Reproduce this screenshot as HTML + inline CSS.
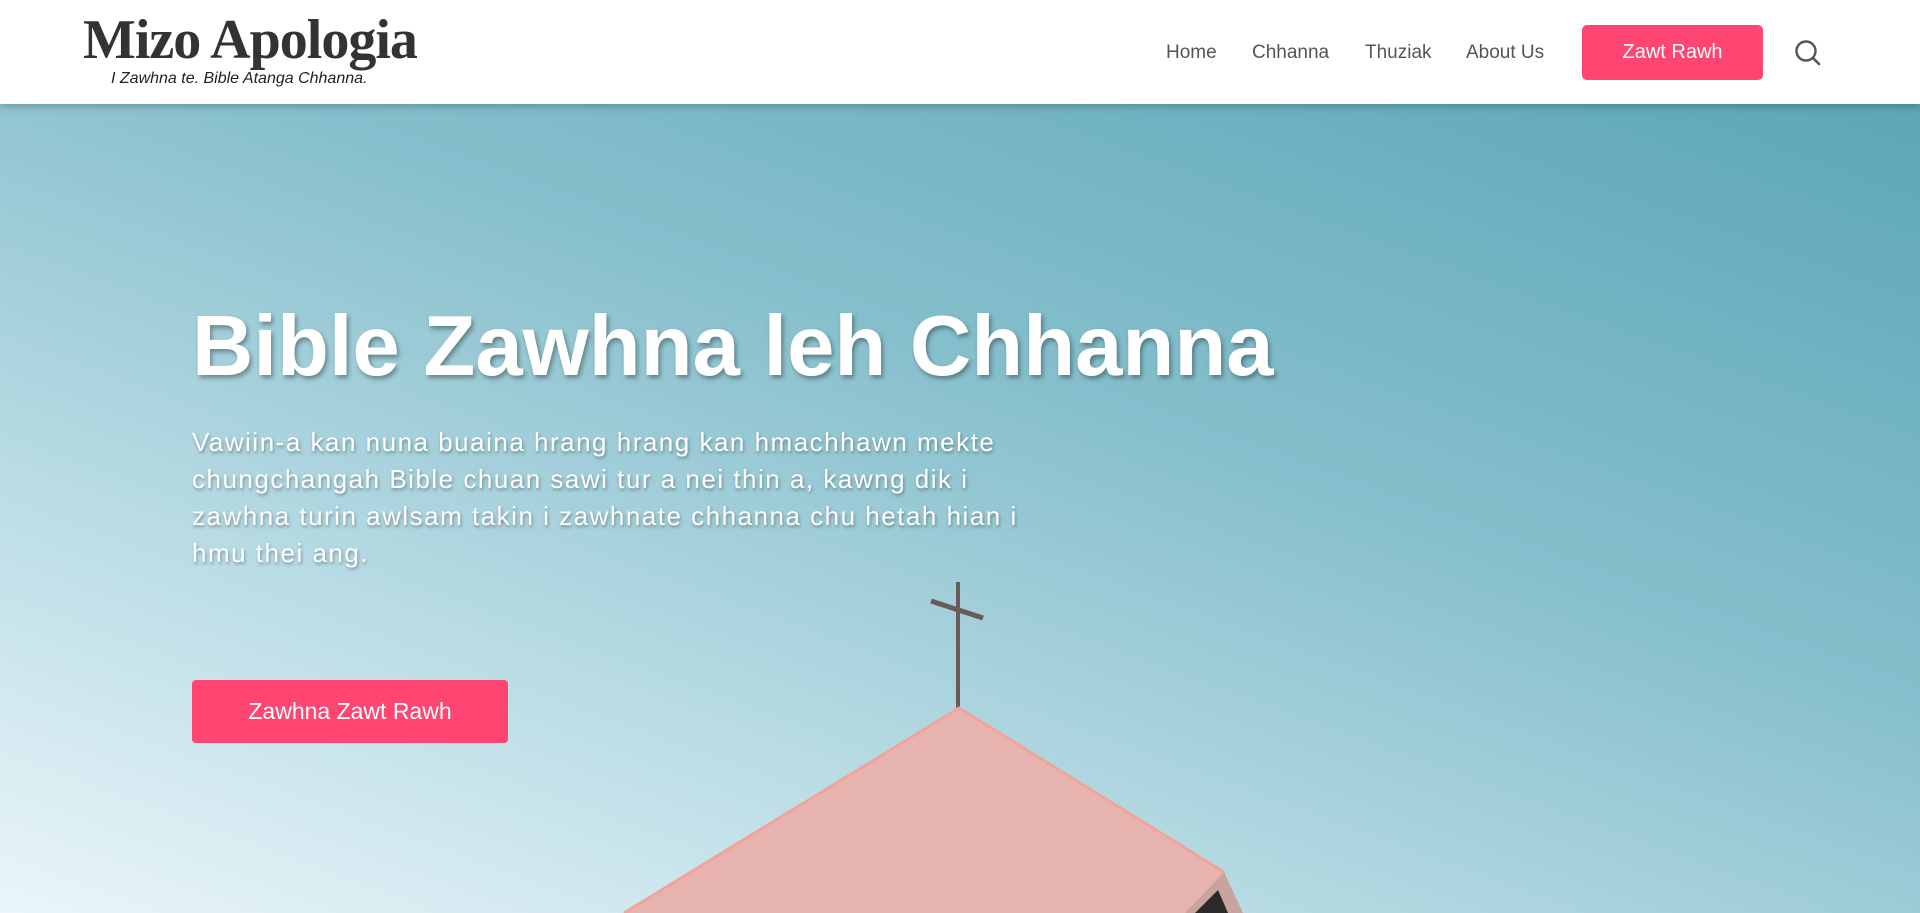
<!DOCTYPE html>
<html><head><meta charset="utf-8"><style>
*{margin:0;padding:0;box-sizing:border-box}
body{width:1920px;height:913px;overflow:hidden;font-family:"Liberation Sans",sans-serif;background:#fff;position:relative}
header{position:absolute;left:0;top:0;width:1920px;height:104px;background:#fff;z-index:5;box-shadow:0 2px 8px rgba(0,0,0,.25)}
.logo{position:absolute;left:83px;top:8px;font-family:"Liberation Serif",serif;font-weight:bold;font-size:56px;color:#333;letter-spacing:-1px}
.tag{position:absolute;left:111px;top:70px;font-style:italic;font-size:16px;color:#222}
nav a{position:absolute;top:42px;font-size:19px;color:#555;text-decoration:none}
.btn{position:absolute;left:1582px;top:25px;width:181px;height:55px;background:#ff4571;border-radius:5px;color:#fff;font-size:20px;text-align:center;line-height:55px}
.hero{position:absolute;left:0;top:104px;width:1920px;height:809px;background:linear-gradient(200deg,#5ca6b8 0%,#86bfcc 40%,#b8dbe4 70%,#eaf6fa 100%)}
.hero h1{position:absolute;left:192px;top:194px;font-size:85px;color:#fff;font-weight:bold;text-shadow:2px 3px 5px rgba(0,0,0,.35);white-space:nowrap}
.hero p{position:absolute;left:192px;top:320px;width:860px;font-size:26px;line-height:37px;letter-spacing:1.5px;color:#fff;text-shadow:1px 2px 3px rgba(0,0,0,.35)}
.hb{position:absolute;left:192px;top:576px;width:316px;height:63px;background:#ff4571;border-radius:4px;color:#fff;font-size:23px;text-align:center;line-height:63px}
</style></head><body>
<header>
<div class="logo">Mizo Apologia</div>
<div class="tag">I Zawhna te. Bible Atanga Chhanna.</div>
<nav><a style="left:1166px">Home</a><a style="left:1252px">Chhanna</a><a style="left:1365px">Thuziak</a><a style="left:1466px">About Us</a></nav>
<div class="btn">Zawt Rawh</div>
<svg style="position:absolute;left:1794px;top:39px" width="28" height="28" viewBox="0 0 28 28"><circle cx="12" cy="12" r="9.5" fill="none" stroke="#555" stroke-width="2.4"/><line x1="19" y1="19" x2="25" y2="25" stroke="#555" stroke-width="2.6" stroke-linecap="round"/></svg>
</header>
<div class="hero">
<svg style="position:absolute;left:0;top:0" width="1920" height="809" viewBox="0 104 1920 809">
<line x1="958" y1="582" x2="958" y2="708" stroke="#6a5a58" stroke-width="4"/>
<line x1="931" y1="601" x2="983" y2="618" stroke="#6a5a58" stroke-width="5"/>
<polygon points="959,708 624,913 1243,913 1224,872" fill="#e6b3ae"/>
<polyline points="624,913 959,708 1224,872" fill="none" stroke="#f0a49a" stroke-width="3"/>
<polygon points="1224,872 1243,913 1185,913" fill="#c9a3a0"/>
<polygon points="1218,890 1228,913 1195,913" fill="#2a2a2a"/>
</svg>
<h1>Bible Zawhna leh Chhanna</h1>
<p>Vawiin-a kan nuna buaina hrang hrang kan hmachhawn mekte chungchangah Bible chuan sawi tur a nei thin a, kawng dik i zawhna turin awlsam takin i zawhnate chhanna chu hetah hian i hmu thei ang.</p>
<div class="hb">Zawhna Zawt Rawh</div>
</div>
</body></html>
